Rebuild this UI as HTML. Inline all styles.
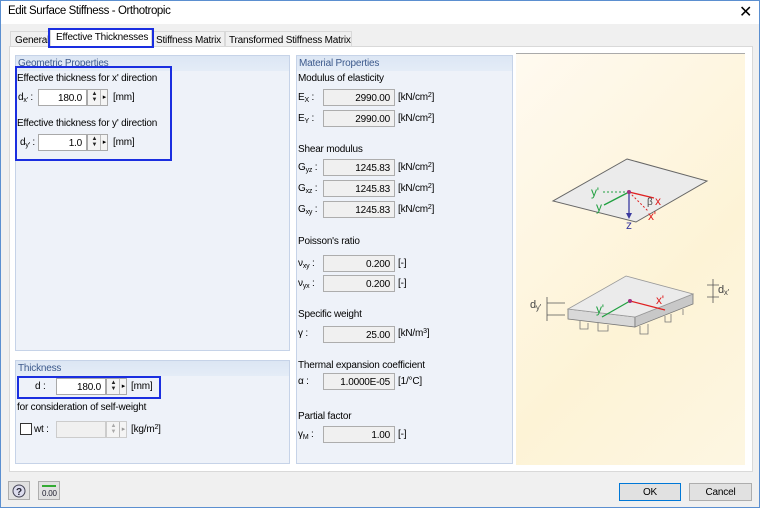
<!DOCTYPE html>
<html><head><meta charset="utf-8"><style>
*{margin:0;padding:0;box-sizing:border-box}
body{width:760px;height:508px;background:#f0f0f0;font-family:"Liberation Sans",Tahoma,sans-serif;font-size:10px;letter-spacing:-0.2px;color:#000;position:relative;overflow:hidden}
.a{position:absolute;white-space:nowrap}
.frame{position:absolute;left:0;top:0;width:760px;height:508px;border:1px solid #5b8fd0;pointer-events:none}
.grp{position:absolute;background:#eef2f9;border:1px solid #c6d3e8}
.gh{position:absolute;left:0;top:0;right:0;height:15px;background:linear-gradient(#dce6f4,#e4ecf7);color:#3d5a8c;padding:2px 0 0 2px}
.in{position:absolute;height:17px;border:1px solid #a9a9a9;background:#fff;text-align:right;padding:3px 4px 0 0}
.ro{background:#f0f0f0;border-color:#adadad}
.sp{position:absolute;height:17px;width:21px;border:1px solid #a9a9a9;background:#f4f4f4}
.sp .u{position:absolute;left:1px;top:1px;width:11px;height:13px;font-size:6px;line-height:6px;text-align:center;color:#222;letter-spacing:0}
.sp .r{position:absolute;left:12px;top:0;width:8px;height:15px;border-left:1px solid #bbb;font-size:7px;line-height:15px;text-align:center;letter-spacing:0}
.dis{border-color:#ccc;color:#aaa}
.btn{position:absolute;height:18px;border:1px solid #adadad;background:#e1e1e1;text-align:center;padding-top:3px}
sub{font-size:7px;vertical-align:-2px}
sup{font-size:7px;vertical-align:3px}
</style></head><body>
<div class="a" style="left:0;top:0;width:760px;height:24px;background:#fff"></div>
<div class="a" style="left:8px;top:5px;font-size:11.5px;letter-spacing:-0.4px">Edit Surface Stiffness - Orthotropic</div>
<div class="a" style="left:739px;top:2px;font-size:16px">✕</div>

<!-- tabs -->
<div class="a" style="left:10px;top:31px;width:40px;height:16px;border:1px solid #d9d9d9;background:#f0f0f0;padding:3px 0 0 4px">General</div>
<div class="a" style="left:152px;top:31px;width:73px;height:16px;border:1px solid #d9d9d9;background:#f0f0f0;padding:3px 0 0 3px">Stiffness Matrix</div>
<div class="a" style="left:225px;top:31px;width:127px;height:16px;border:1px solid #d9d9d9;background:#f0f0f0;padding:3px 0 0 3px">Transformed Stiffness Matrix</div>
<div class="a" style="left:9px;top:46px;width:744px;height:426px;background:#fff;border:1px solid #d9d9d9"></div>
<div class="a" style="left:50px;top:29px;width:102px;height:19px;background:#fff;border-left:1px solid #d9d9d9;border-right:1px solid #d9d9d9"></div>
<div class="a" style="left:48px;top:28px;width:106px;height:20px;border:2px solid #1a2ee0"></div>
<div class="a" style="left:56px;top:32px">Effective Thicknesses</div>

<!-- Geometric -->
<div class="grp" style="left:15px;top:55px;width:275px;height:296px"><div class="gh">Geometric Properties</div></div>
<div class="a" style="left:17px;top:73px">Effective thickness for x' direction</div>
<div class="a" style="left:18px;top:92px">d<sub>x'</sub> :</div>
<div class="in" style="left:38px;top:89px;width:49px">180.0</div>
<div class="sp" style="left:87px;top:89px"><div class="u">▲<br>▼</div><div class="r">▸</div></div>
<div class="a" style="left:113px;top:92px">[mm]</div>
<div class="a" style="left:17px;top:118px">Effective thickness for y' direction</div>
<div class="a" style="left:20px;top:137px">d<sub>y'</sub> :</div>
<div class="in" style="left:38px;top:134px;width:49px">1.0</div>
<div class="sp" style="left:87px;top:134px"><div class="u">▲<br>▼</div><div class="r">▸</div></div>
<div class="a" style="left:113px;top:137px">[mm]</div>
<div class="a" style="left:15px;top:66px;width:157px;height:95px;border:2px solid #1a2ee0"></div>

<!-- Thickness -->
<div class="grp" style="left:15px;top:360px;width:275px;height:104px"><div class="gh">Thickness</div></div>
<div class="a" style="left:17px;top:376px;width:144px;height:23px;border:2px solid #1a2ee0"></div>
<div class="a" style="left:35px;top:381px">d :</div>
<div class="in" style="left:56px;top:378px;width:50px">180.0</div>
<div class="sp" style="left:106px;top:378px"><div class="u">▲<br>▼</div><div class="r">▸</div></div>
<div class="a" style="left:131px;top:381px">[mm]</div>
<div class="a" style="left:17px;top:402px">for consideration of self-weight</div>
<div class="a" style="left:20px;top:423px;width:12px;height:12px;border:1px solid #333;background:#fff"></div>
<div class="a" style="left:34px;top:424px">wt :</div>
<div class="in ro" style="left:56px;top:421px;width:50px;border-color:#ccc"></div>
<div class="sp dis" style="left:106px;top:421px"><div class="u" style="color:#aaa">▲<br>▼</div><div class="r" style="color:#999">▸</div></div>
<div class="a" style="left:131px;top:424px">[kg/m<sup>2</sup>]</div>

<!-- Material -->
<div class="grp" style="left:296px;top:55px;width:217px;height:409px"><div class="gh">Material Properties</div></div>
<div class="a" style="left:298px;top:73px">Modulus of elasticity</div>
<div class="a" style="left:298px;top:144px">Shear modulus</div>
<div class="a" style="left:298px;top:236px">Poisson's ratio</div>
<div class="a" style="left:298px;top:309px">Specific weight</div>
<div class="a" style="left:298px;top:360px">Thermal expansion coefficient</div>
<div class="a" style="left:298px;top:411px">Partial factor</div>

<div class="a" style="left:298px;top:92px">E<sub>X</sub> :</div><div class="in ro" style="left:323px;top:89px;width:72px">2990.00</div><div class="a" style="left:398px;top:92px">[kN/cm<sup>2</sup>]</div>
<div class="a" style="left:298px;top:113px">E<sub>Y</sub> :</div><div class="in ro" style="left:323px;top:110px;width:72px">2990.00</div><div class="a" style="left:398px;top:113px">[kN/cm<sup>2</sup>]</div>
<div class="a" style="left:298px;top:162px">G<sub>yz</sub> :</div><div class="in ro" style="left:323px;top:159px;width:72px">1245.83</div><div class="a" style="left:398px;top:162px">[kN/cm<sup>2</sup>]</div>
<div class="a" style="left:298px;top:183px">G<sub>xz</sub> :</div><div class="in ro" style="left:323px;top:180px;width:72px">1245.83</div><div class="a" style="left:398px;top:183px">[kN/cm<sup>2</sup>]</div>
<div class="a" style="left:298px;top:204px">G<sub>xy</sub> :</div><div class="in ro" style="left:323px;top:201px;width:72px">1245.83</div><div class="a" style="left:398px;top:204px">[kN/cm<sup>2</sup>]</div>
<div class="a" style="left:298px;top:258px">ν<sub>xy</sub> :</div><div class="in ro" style="left:323px;top:255px;width:72px">0.200</div><div class="a" style="left:398px;top:258px">[-]</div>
<div class="a" style="left:298px;top:278px">ν<sub>yx</sub> :</div><div class="in ro" style="left:323px;top:275px;width:72px">0.200</div><div class="a" style="left:398px;top:278px">[-]</div>
<div class="a" style="left:298px;top:328px">γ :</div><div class="in ro" style="left:323px;top:326px;width:72px">25.00</div><div class="a" style="left:398px;top:328px">[kN/m<sup>3</sup>]</div>
<div class="a" style="left:298px;top:376px">α :</div><div class="in ro" style="left:323px;top:373px;width:72px">1.0000E-05</div><div class="a" style="left:398px;top:376px">[1/°C]</div>
<div class="a" style="left:298px;top:429px">γ<sub>M</sub> :</div><div class="in ro" style="left:323px;top:426px;width:72px">1.00</div><div class="a" style="left:398px;top:429px">[-]</div>

<!-- picture -->
<div class="a" style="left:516px;top:53px;width:229px;height:412px;border-top:1px solid #aaa;background:linear-gradient(135deg,#fffaf0,#fdf3d6 60%,#fdf6e2)"></div>
<svg class="a" style="left:0;top:0" width="760" height="508">
<polygon points="627,159 707,181 636,222 553,201" fill="#ebebeb" stroke="#666" stroke-width="1"/>
<line x1="629" y1="192" x2="629" y2="215" stroke="#3a3aa0" stroke-width="1.3"/>
<path d="M626,213 L629,219 L632,213z" fill="#3a3aa0"/>
<line x1="629" y1="192" x2="654" y2="198" stroke="#e02020" stroke-width="1.3"/>
<line x1="629" y1="192" x2="648" y2="211" stroke="#e02020" stroke-dasharray="2,2"/>
<line x1="629" y1="192" x2="604" y2="205" stroke="#20a040" stroke-width="1.3"/>
<line x1="629" y1="192" x2="603" y2="192" stroke="#20a040" stroke-dasharray="2,2"/>
<circle cx="629" cy="192" r="2" fill="#a03080"/>
<text x="655" y="205" fill="#e02020" font-size="12">x</text>
<text x="648" y="220" fill="#e02020" font-size="12">x'</text>
<text x="596" y="211" fill="#20a040" font-size="12">y</text>
<text x="591" y="196" fill="#20a040" font-size="12">y'</text>
<text x="626" y="229" fill="#3a3aa0" font-size="12">z</text>
<text x="647" y="205" fill="#444" font-size="10">β</text>
<polygon points="568,309 635,317 635,327 568,319" fill="#d8d8d8" stroke="#777" stroke-width=".8"/>
<polygon points="635,317 693,294 693,304 635,327" fill="#c8c8c8" stroke="#777" stroke-width=".8"/>
<polygon points="626,276 693,294 635,317 568,309" fill="#ebebeb" stroke="#999" stroke-width=".8"/>
<path d="M580,321v8h8v-6 M598,323v8h10v-6 M640,326v8h8v-10 M665,316v6h6v-8 M683,309v6" fill="none" stroke="#777" stroke-width=".8"/>
<line x1="630" y1="301" x2="665" y2="310" stroke="#e02020" stroke-width="1.2"/>
<line x1="630" y1="301" x2="602" y2="317" stroke="#20a040" stroke-width="1.2"/>
<circle cx="630" cy="301" r="2" fill="#a03080"/>
<text x="656" y="304" fill="#e02020" font-size="12">x'</text>
<text x="596" y="313" fill="#20a040" font-size="12">y'</text>
<path d="M547,303h18 M547,315h18 M547,297v24 M707,285h12 M707,297h12 M713,279v24" stroke="#555" stroke-width=".8" fill="none"/>
<text x="530" y="308" fill="#444" font-size="11">d<tspan font-size="8" dy="2">y'</tspan></text>
<text x="718" y="293" fill="#444" font-size="11">d<tspan font-size="8" dy="2">x'</tspan></text>
</svg>

<!-- bottom -->
<div class="btn" style="left:8px;top:481px;width:22px;height:19px;padding-top:1px"><svg width="18" height="16"><circle cx="9" cy="8" r="6" fill="#dde" stroke="#445" stroke-width="1"/><text x="6" y="12" font-size="10" font-weight="bold" fill="#223">?</text></svg></div>
<div class="btn" style="left:38px;top:481px;width:22px;height:19px;padding-top:1px"><svg width="18" height="16"><rect x="2" y="2" width="14" height="2" fill="#3a3"/><text x="2" y="13" font-size="8" fill="#223">0.00</text></svg></div>
<div class="btn" style="left:619px;top:483px;width:62px;border:1px solid #0078d7">OK</div>
<div class="btn" style="left:689px;top:483px;width:63px">Cancel</div>
<div class="frame"></div>
</body></html>
